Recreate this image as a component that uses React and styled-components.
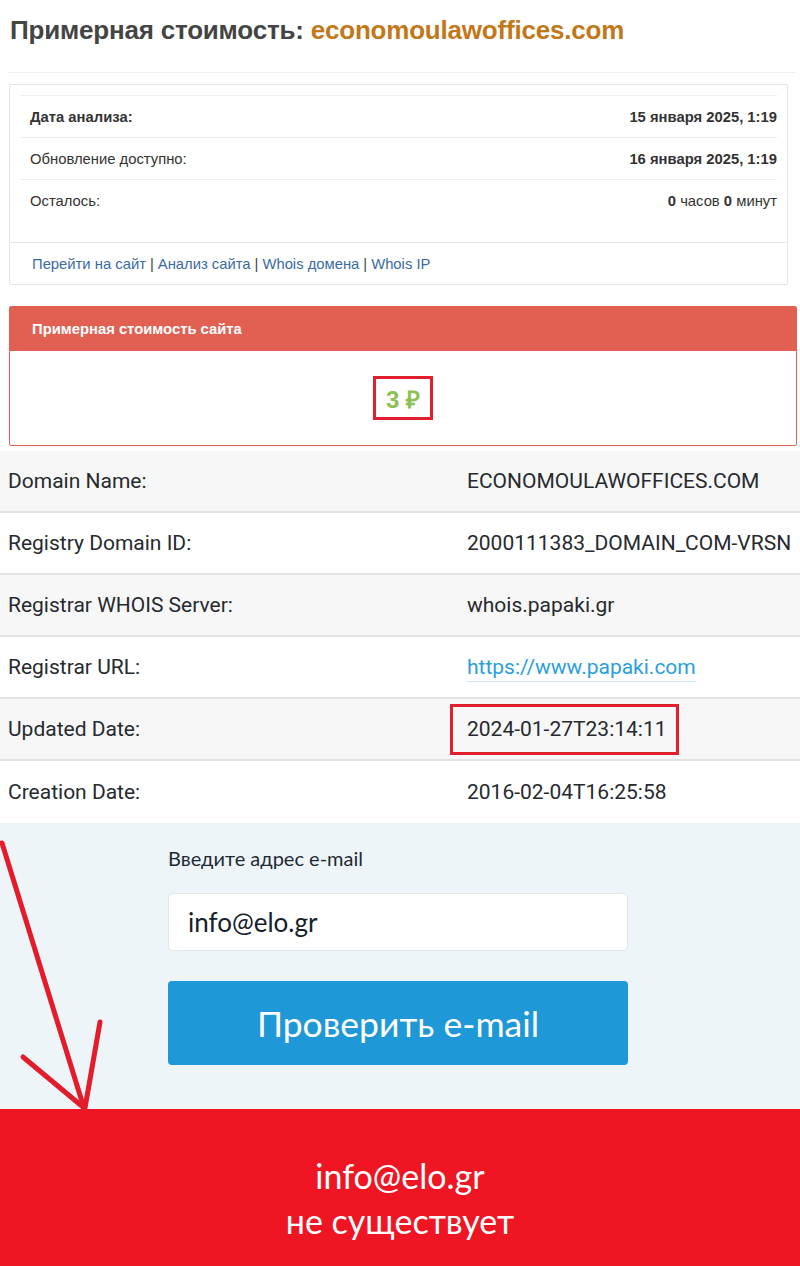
import styled, { createGlobalStyle } from "styled-components"

const GlobalStyle = createGlobalStyle`
  body {
    margin: 0;
    background: #fff;
    font-family: "Liberation Sans", Arial, sans-serif;
  }
`

const Page = styled.div`
  position: relative;
  width: 800px;
  height: 1266px;
  overflow: hidden;
`

const Title = styled.h1`
  margin: 0 4px 0 8px;
  padding: 15px 0 0 2px;
  height: 73px;
  box-sizing: border-box;
  font-size: 26px;
  font-weight: bold;
  letter-spacing: -0.2px;
  color: #444;
  border-bottom: 1px solid #eee;
`

const Domain = styled.span`
  color: #c27818;
`

const Card = styled.div`
  margin: 11px 12px 0 9px;
  border: 1px solid #e4e4e4;
  border-radius: 2px;
`

const InfoTable = styled.div`
  padding: 10px 10px 21px;
  font-size: 14.8px;
  color: #333;
`

const InfoRow = styled.div`
  display: flex;
  justify-content: space-between;
  align-items: center;
  height: 42px;
  padding: 0 0 0 10px;
  border-top: 1px solid #eee;
  box-sizing: border-box;
`

const Strong = styled.b`
  font-weight: bold;
`

const Links = styled.div`
  border-top: 1px solid #e8e8e8;
  height: 41px;
  display: flex;
  align-items: center;
  padding-left: 22px;
  font-size: 14.8px;
  color: #444;
`

const LinkItem = styled.a`
  color: #3a6ba5;
  text-decoration: none;
`

const Sep = styled.span`
  margin: 0 4px;
`

const PricePanel = styled.div`
  margin: 21px 3px 0 9px;
  border: 1px solid #e06052;
  border-radius: 2px;
`

const PriceHead = styled.div`
  background: #e26052;
  color: #fff;
  font-weight: bold;
  font-size: 14.8px;
  height: 44px;
  display: flex;
  align-items: center;
  padding-left: 22px;
`

const PriceBody = styled.div`
  height: 94px;
  display: flex;
  align-items: center;
  justify-content: center;
`

const Mark = styled.div`
  border: 3px solid #e11f2e;
  box-sizing: border-box;
  display: flex;
  align-items: center;
  justify-content: center;
  ${(p) => p.$w && `width: ${p.$w}px;`}
  ${(p) => p.$h && `height: ${p.$h}px;`}
`

const Price = styled.span`
  color: #8cc152;
  font-weight: bold;
  font-size: 24px;
`

const Whois = styled.div`
  margin-top: 5px;
  font-family: Roboto, "Liberation Sans", sans-serif;
  font-size: 21px;
  color: #262a2f;
`

const WhoisRow = styled.div`
  display: grid;
  grid-template-columns: 459px 1fr;
  align-items: center;
  height: 62px;
  box-sizing: border-box;
  padding-left: 8px;
  white-space: nowrap;
  background: ${(p) => (p.$alt ? "#f7f7f7" : "#fff")};
  border-bottom: ${(p) => (p.$last ? "none" : "2px solid #e3e3e3")};
`

const UrlLink = styled.a`
  color: #2b9fdc;
  text-decoration: none;
  border-bottom: 1px solid #cfe6f4;
  padding-bottom: 2px;
`

const DateMark = styled.span`
  display: inline-flex;
  align-items: center;
  border: 3px solid #e11f2e;
  margin-left: -17px;
  padding: 0 9px 0 14px;
  height: 51px;
  box-sizing: border-box;
`

const Checker = styled.div`
  background: #eef5f9;
  height: 286px;
  padding: 23px 0 0 168px;
  box-sizing: border-box;
  font-family: Lato, "Open Sans", sans-serif;
`

const FieldLabel = styled.div`
  font-size: 20px;
  color: #1d2a33;
  height: 47px;
`

const EmailInput = styled.div`
  width: 460px;
  height: 58px;
  box-sizing: border-box;
  background: #fff;
  border: 1px solid #e2e6ea;
  border-radius: 5px;
  display: flex;
  align-items: center;
  padding-left: 19px;
  font-size: 26px;
  color: #14212b;
`

const CheckButton = styled.button`
  display: block;
  margin-top: 30px;
  width: 460px;
  height: 84px;
  border: none;
  border-radius: 4px;
  background: #1e98d7;
  color: #fff;
  font-family: Lato, "Open Sans", sans-serif;
  font-size: 35.5px;
  font-weight: 400;
`

const Result = styled.div`
  background: #ef1523;
  height: 158px;
  display: flex;
  flex-direction: column;
  align-items: center;
  justify-content: center;
  color: #fff;
  font-family: Lato, "Open Sans", sans-serif;
  font-size: 34px;
  line-height: 45px;
  padding-top: 20px;
  box-sizing: border-box;
`

const Arrow = styled.svg`
  position: absolute;
  left: 0;
  top: 830px;
  pointer-events: none;
`

const whois = [
  ["Domain Name:", "ECONOMOULAWOFFICES.COM"],
  ["Registry Domain ID:", "2000111383_DOMAIN_COM-VRSN"],
  ["Registrar WHOIS Server:", "whois.papaki.gr"],
  ["Registrar URL:", "url"],
  ["Updated Date:", "mark"],
  ["Creation Date:", "2016-02-04T16:25:58"],
]

function renderValue(v) {
  if (v === "url") return <span><UrlLink href="#">https://www.papaki.com</UrlLink></span>
  if (v === "mark") return <span><DateMark>2024-01-27T23:14:11</DateMark></span>
  return <span>{v}</span>
}

export default function App() {
  return (
    <Page>
      <GlobalStyle />
      <Title>
        Примерная стоимость: <Domain>economoulawoffices.com</Domain>
      </Title>

      <Card>
        <InfoTable>
          <InfoRow>
            <Strong>Дата анализа:</Strong>
            <Strong>15 января 2025, 1:19</Strong>
          </InfoRow>
          <InfoRow>
            <span>Обновление доступно:</span>
            <Strong>16 января 2025, 1:19</Strong>
          </InfoRow>
          <InfoRow>
            <span>Осталось:</span>
            <span>
              <Strong>0</Strong> часов <Strong>0</Strong> минут
            </span>
          </InfoRow>
        </InfoTable>
        <Links>
          <LinkItem href="#">Перейти на сайт</LinkItem>
          <Sep>|</Sep>
          <LinkItem href="#">Анализ сайта</LinkItem>
          <Sep>|</Sep>
          <LinkItem href="#">Whois домена</LinkItem>
          <Sep>|</Sep>
          <LinkItem href="#">Whois IP</LinkItem>
        </Links>
      </Card>

      <PricePanel>
        <PriceHead>Примерная стоимость сайта</PriceHead>
        <PriceBody>
          <Mark $w={60} $h={44}>
            <Price>3 ₽</Price>
          </Mark>
        </PriceBody>
      </PricePanel>

      <Whois>
        {whois.map(([label, value], i) => (
          <WhoisRow key={label} $alt={i % 2 === 0} $last={i === whois.length - 1}>
            <span>{label}</span>
            {renderValue(value)}
          </WhoisRow>
        ))}
      </Whois>

      <Checker>
        <FieldLabel>Введите адрес e-mail</FieldLabel>
        <EmailInput>info@elo.gr</EmailInput>
        <CheckButton>Проверить e-mail</CheckButton>
      </Checker>

      <Result>
        <div>info@elo.gr</div>
        <div>не существует</div>
      </Result>

      <Arrow width="120" height="290" viewBox="0 830 120 290">
        <g stroke="#e41b2a" strokeWidth="5" strokeLinecap="round" fill="none">
          <path d="M2 843 L84 1108" />
          <path d="M23 1057 L83 1107" />
          <path d="M100 1022 L85 1108" />
        </g>
      </Arrow>
    </Page>
  )
}
